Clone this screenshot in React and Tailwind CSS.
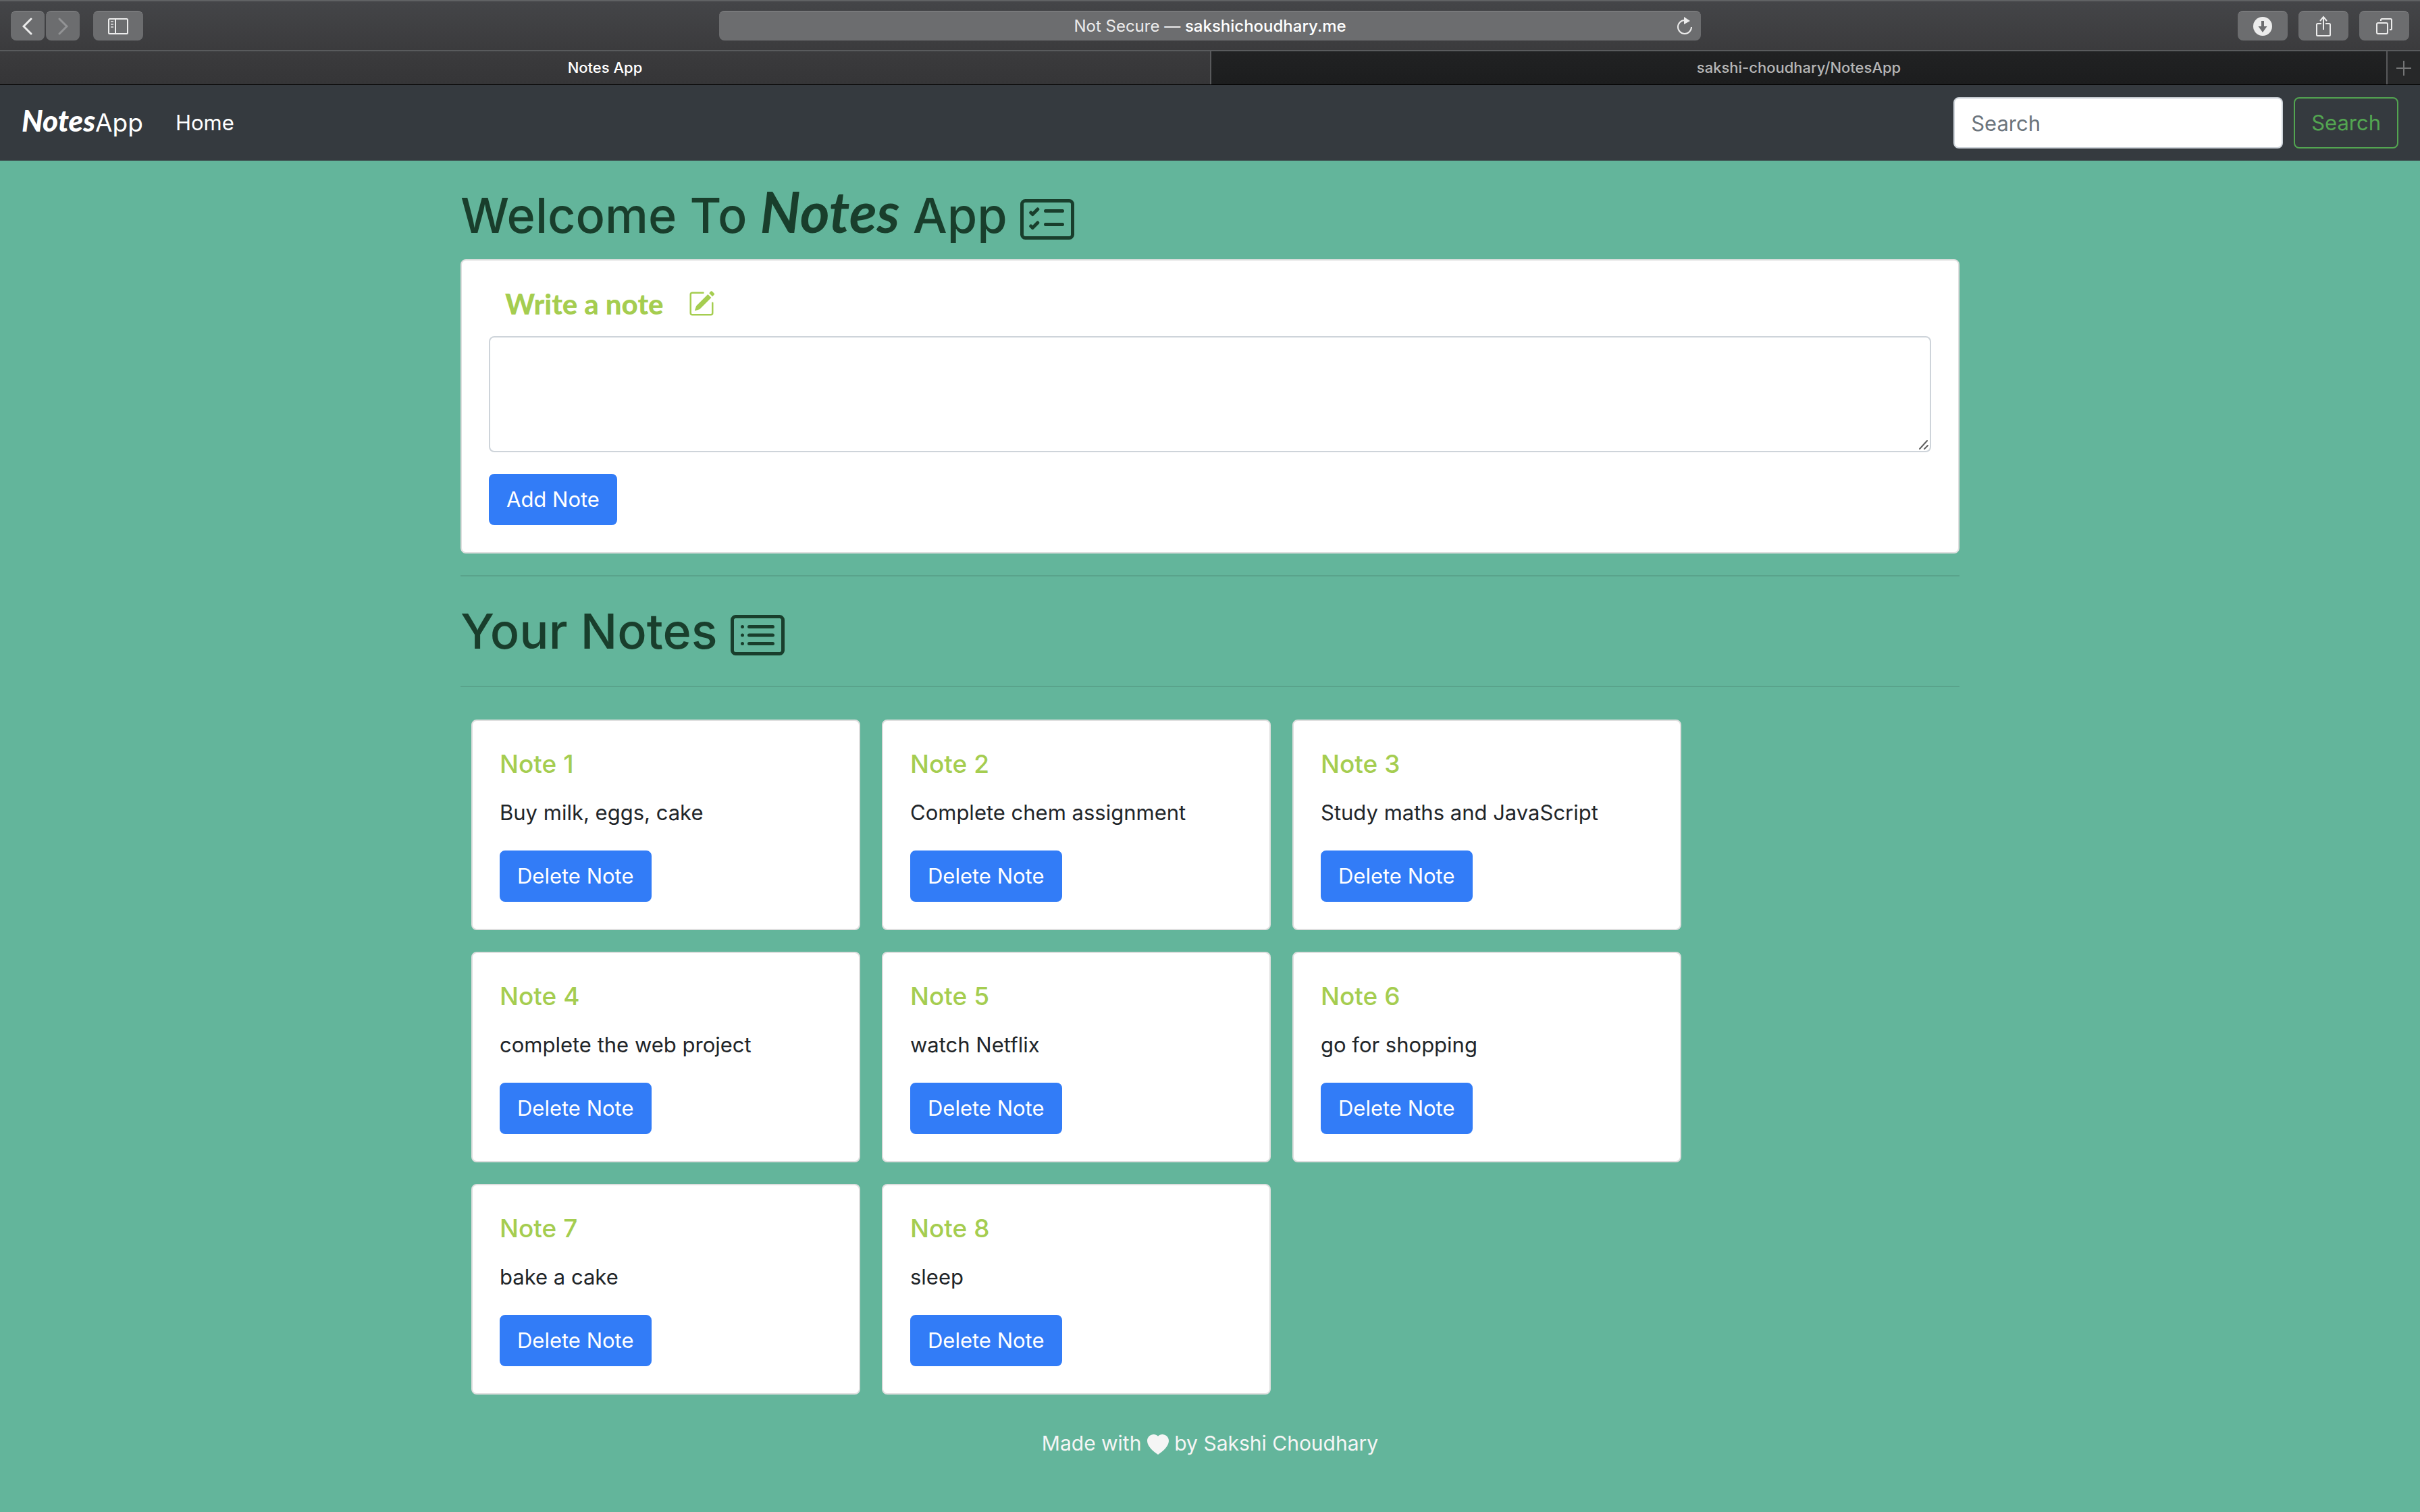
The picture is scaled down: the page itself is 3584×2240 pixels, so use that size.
import React from "react";
import { BsCardChecklist, BsCardList, BsPencilSquare, BsHeartFill } from "react-icons/bs";

const NOTES = [
  "Buy milk, eggs, cake",
  "Complete chem assignment",
  "Study maths and JavaScript",
  "complete the web project",
  "watch Netflix",
  "go for shopping",
  "bake a cake",
  "sleep",
];

const CHROME_BUTTON =
  "flex h-11 items-center justify-center rounded-lg border-t border-[#858688] bg-[#6c6d6f] text-[#ececec]";

function ChromeButton({ label, className, children }) {
  return (
    <button type="button" aria-label={label} className={CHROME_BUTTON + " " + className}>
      {children}
    </button>
  );
}

function BrowserChrome() {
  return (
    <div className="border-b border-black">
      <div className="flex h-[76px] items-center justify-between border-t-2 border-b-2 border-t-[#606264] border-b-[#595b5d] bg-linear-to-b from-[#444548] to-[#3b3b3d] px-4">
        <div className="flex flex-1 items-center">
          <ChromeButton label="Back" className="w-[50px]">
            <svg width="16" height="26" viewBox="0 0 16 26" fill="none" stroke="currentColor" strokeWidth="3" strokeLinecap="round">
              <path d="M13 2 2 13l11 11" />
            </svg>
          </ChromeButton>
          <ChromeButton label="Forward" className="ml-0.5 w-[50px]">
            <svg width="16" height="26" viewBox="0 0 16 26" fill="none" stroke="#929395" strokeWidth="3" strokeLinecap="round">
              <path d="M3 2l11 11L3 24" />
            </svg>
          </ChromeButton>
          <ChromeButton label="Show sidebar" className="ml-5 w-[74px]">
            <svg width="30" height="24" viewBox="0 0 30 24" fill="none" stroke="currentColor" strokeWidth="2">
              <rect x="1" y="1" width="28" height="22" rx="1.5" />
              <path d="M11 1v22" />
              <path d="M4 5h4M4 9h4M4 13h4" opacity="0.7" />
            </svg>
          </ChromeButton>
        </div>
        <div className="flex h-11 w-[1454px] items-center rounded-lg border-t border-[#858688] bg-[#6c6d6f] pr-3 pl-9">
          <p className="flex-1 text-center text-[24px] leading-8 text-[#ececec]">
            Not Secure — <span className="font-medium text-white">sakshichoudhary.me</span>
          </p>
          <button type="button" aria-label="Reload" className="text-[#ececec]">
            <svg width="24" height="28" viewBox="0 0 24 28" fill="none" stroke="currentColor" strokeWidth="2">
              <path d="M22 15A10 10 0 1 1 12 5" />
              <path d="M11 0v11l9-5z" fill="currentColor" stroke="none" />
            </svg>
          </button>
        </div>
        <div className="flex flex-1 justify-end gap-4">
          <ChromeButton label="Downloads" className="w-[74px]">
            <svg width="28" height="28" viewBox="0 0 28 28">
              <circle cx="14" cy="14" r="14" fill="currentColor" />
              <path d="M12 6h4v8h4.500L14 23 7.500 14H12z" fill="#6c6d6f" />
            </svg>
          </ChromeButton>
          <ChromeButton label="Share" className="w-[74px]">
            <svg width="22" height="32" viewBox="0 0 22 32" fill="none" stroke="currentColor" strokeWidth="2">
              <path d="M8 12H2.500Q1 12 1 13.500V28.500Q1 30 2.500 30h17q1.500 0 1.500-1.500V13.500Q21 12 19.500 12H14" />
              <path d="M11 21V3M6 8l5-6 5 6" />
            </svg>
          </ChromeButton>
          <ChromeButton label="Show all tabs" className="w-[74px]">
            <svg width="24" height="24" viewBox="0 0 24 24" fill="none" stroke="currentColor" strokeWidth="2">
              <rect x="1" y="7" width="16" height="16" rx="2" />
              <path d="M7 4V2.500Q7 1 8.500 1H21.500Q23 1 23 2.500V15.500Q23 17 21.500 17H20" />
            </svg>
          </ChromeButton>
        </div>
      </div>
      <div role="tablist" className="flex h-[49px] text-[22px] font-medium">
        <button type="button" role="tab" aria-selected="true" className="w-1/2 bg-linear-to-b from-[#3b3b3d] to-[#353537] text-white">
          Notes App
        </button>
        <button type="button" role="tab" aria-selected="false" className="flex-1 border-x-2 border-[#58595b] bg-linear-to-b from-[#212223] to-[#1c1d1e] text-[#b5b5b5]">
          sakshi-choudhary/NotesApp
        </button>
        <button type="button" aria-label="New tab" className="flex w-12 items-center justify-center bg-[#272829] text-[#747576]">
          <svg width="22" height="22" viewBox="0 0 22 22" stroke="currentColor" strokeWidth="2">
            <path d="M11 0v22M0 11h22" />
          </svg>
        </button>
      </div>
    </div>
  );
}

function Navbar() {
  return (
    <nav className="flex items-center justify-between bg-[#353a3f] px-8 py-4 text-white">
      <div className="flex items-center gap-12">
        <a href="#" className="text-[37px] leading-[80px]">
          <span className="font-[Lato] text-[44px] leading-none font-black italic">Notes</span>App
        </a>
        <a href="#" className="text-[31px] leading-[80px]">Home</a>
      </div>
      <form className="flex gap-4" onSubmit={(e) => e.preventDefault()}>
        <input
          type="search"
          aria-label="Search"
          placeholder="Search"
          className="h-[76px] w-[488px] rounded-lg border-2 border-[#ced4da] bg-white px-6 text-[31px] text-[#495057] placeholder:text-[#6c757d]"
        />
        <button type="submit" className="h-[76px] rounded-lg border-2 border-[#53a551] px-6 text-[31px] text-[#53a551]">
          Search
        </button>
      </form>
    </nav>
  );
}

function PrimaryButton({ children }) {
  return (
    <button type="button" className="h-[76px] rounded-lg border-2 border-[#327cf7] bg-[#327cf7] px-6 text-[31px] text-white">
      {children}
    </button>
  );
}

function NoteCard({ number, text }) {
  return (
    <article className="w-[576px] rounded-lg border-2 border-[#dfdfdf] bg-white p-10">
      <h5 className="mb-6 text-[37px] leading-[48px] font-medium text-[#a5cd50]">Note {number}</h5>
      <p className="mb-8 text-[31px] leading-[48px] text-[#212529]">{text}</p>
      <PrimaryButton>Delete Note</PrimaryButton>
    </article>
  );
}

export default function App() {
  return (
    <div className="min-h-screen bg-[#63b59b] font-[Inter,sans-serif]">
      <BrowserChrome />
      <Navbar />
      <main className="mx-auto max-w-[2220px] py-8 text-[#193e2c]">
        <h1 className="mb-4 text-[72px] leading-[98px] font-medium">
          Welcome To <span className="font-[Lato] text-[84px] leading-none font-bold italic">Notes</span> App{" "}
          <BsCardChecklist className="inline size-20 align-middle" />
        </h1>
        <section className="rounded-lg border-2 border-[#dfdfdf] bg-white p-10">
          <h5 className="mb-6 flex h-12 items-center gap-9 pl-6 text-[#a5cd50]">
            <label htmlFor="note" className="font-[Lato] text-[42px] leading-[48px] font-black">Write a note</label>
            <BsPencilSquare className="size-10" />
          </h5>
          <div className="relative mb-8">
            <textarea id="note" className="block h-[172px] w-full resize-none rounded-lg border-2 border-[#ced4da] px-6 py-3 text-[31px] text-[#495057]" />
            <svg className="absolute right-1 bottom-1" width="14" height="14" viewBox="0 0 14 14" stroke="#5f5f5f" strokeWidth="2" strokeLinecap="round">
              <path d="M1 13 12 1M8 13l5-5" />
            </svg>
          </div>
          <PrimaryButton>Add Note</PrimaryButton>
        </section>
        <hr className="my-8 border-t-2 border-[#59a38b]" />
        <h1 className="text-[72px] leading-[98px] font-medium">
          Your Notes <BsCardList className="inline size-20 align-middle" />
        </h1>
        <hr className="my-8 border-t-2 border-[#59a38b]" />
        <div className="flex flex-wrap gap-8 p-4 pr-96">
          {NOTES.map((text, i) => (
            <NoteCard key={text} number={i + 1} text={text} />
          ))}
        </div>
      </main>
      <footer className="text-center text-[30px] leading-[48px] text-[#f5f5f5]">
        Made with <BsHeartFill className="inline size-8 align-middle" /> by Sakshi Choudhary
      </footer>
    </div>
  );
}
